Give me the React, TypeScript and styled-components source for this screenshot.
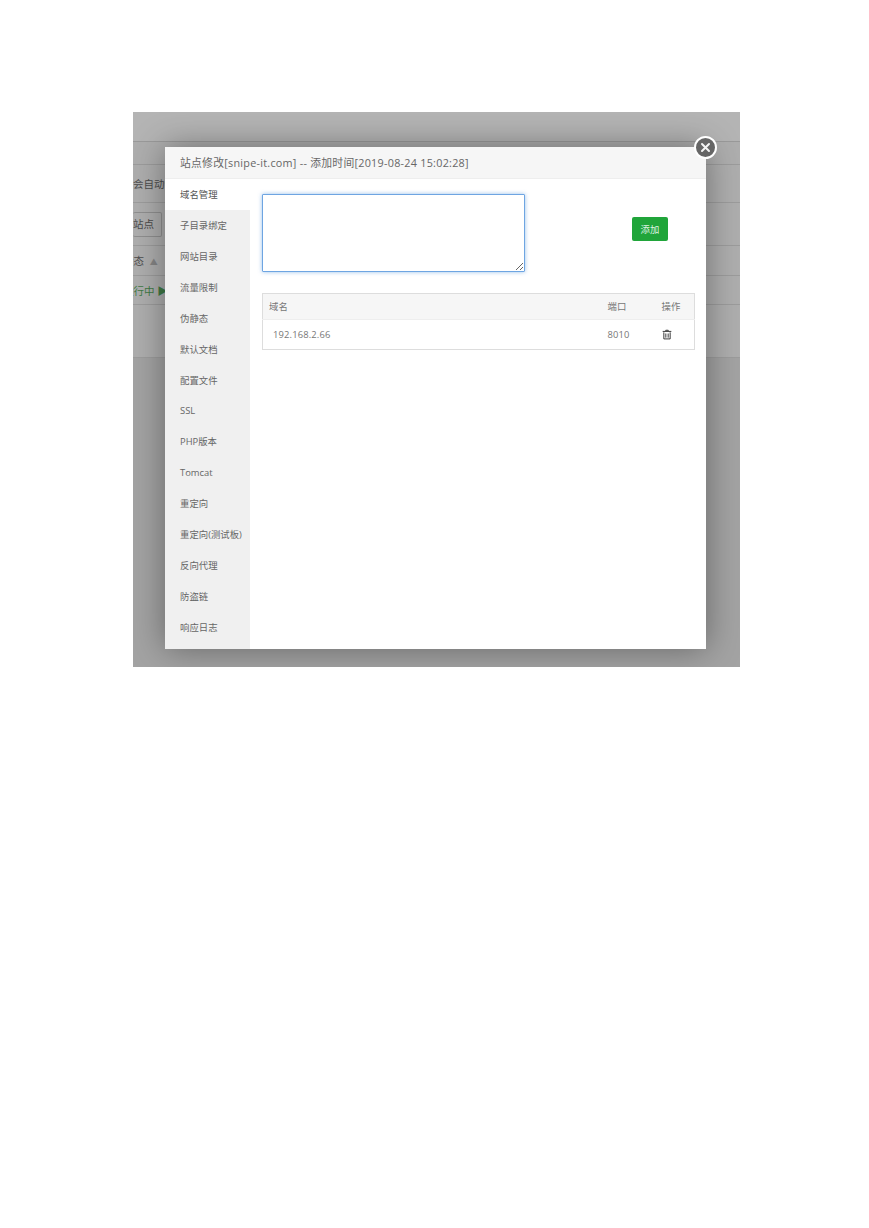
import styled, { createGlobalStyle } from "styled-components";

const FONT = `"Open Sans", "Noto Sans CJK SC", sans-serif`;

const menuItems = [
  "域名管理",
  "子目录绑定",
  "网站目录",
  "流量限制",
  "伪静态",
  "默认文档",
  "配置文件",
  "SSL",
  "PHP版本",
  "Tomcat",
  "重定向",
  "重定向(测试板)",
  "反向代理",
  "防盗链",
  "响应日志",
];

const App = () => {
  return (
    <>
      <GlobalStyle />
      <Page>
        <Shot>
          <TopBand />
          <BackRow $height={23} />
          <BackRow $height={38}>
            <BackText>会自动创建</BackText>
          </BackRow>
          <BackRow $height={43}>
            <BackButton>站点</BackButton>
            <BackButton>&nbsp;</BackButton>
          </BackRow>
          <BackRow $height={30}>
            <ClippedText>
              状态 <SortArrow>▲</SortArrow>
            </ClippedText>
          </BackRow>
          <BackRow $height={29}>
            <BackStatus>运行中 ▶</BackStatus>
          </BackRow>
          <BackRow $height={53} />
          <Modal>
            <CloseButton aria-label="close">
              <svg width="11" height="11" viewBox="0 0 11 11">
                <path
                  d="M2 2 L9 9 M9 2 L2 9"
                  stroke="#f4f4f4"
                  strokeWidth="2"
                  strokeLinecap="round"
                />
              </svg>
            </CloseButton>
            <ModalTitle>站点修改[snipe-it.com] -- 添加时间[2019-08-24 15:02:28]</ModalTitle>
            <ModalBody>
              <Sidebar>
                {menuItems.map((item, i) => (
                  <MenuItem key={item} $active={i === 0}>
                    {item}
                  </MenuItem>
                ))}
              </Sidebar>
              <Content>
                <FormRow>
                  <DomainInput />
                  <AddButton>添加</AddButton>
                </FormRow>
                <DomainTable>
                  <colgroup>
                    <col />
                    <col width="54" />
                    <col width="40" />
                  </colgroup>
                  <thead>
                    <tr>
                      <NameHeadCell>域名</NameHeadCell>
                      <HeadCell>端口</HeadCell>
                      <HeadCell>操作</HeadCell>
                    </tr>
                  </thead>
                  <tbody>
                    <tr>
                      <DomainCell>192.168.2.66</DomainCell>
                      <BodyCell>8010</BodyCell>
                      <BodyCell>
                        <TrashIcon viewBox="0 0 12 12">
                          <path
                            d="M4.5 1.8 V0.9 H7.5 V1.8 M0.8 2.3 H11.2 M2.2 3.4 V11.3 H9.8 V3.4 M4.6 4.8 V9.8 M7.4 4.8 V9.8"
                            fill="none"
                            stroke="#2a2a2a"
                            strokeWidth="1.1"
                          />
                        </TrashIcon>
                      </BodyCell>
                    </tr>
                  </tbody>
                </DomainTable>
              </Content>
            </ModalBody>
          </Modal>
        </Shot>
      </Page>
    </>
  );
};
export default App;

const GlobalStyle = createGlobalStyle`
  html, body {
    margin: 0;
    padding: 0;
    background: #fff;
  }
`;

const Page = styled.div`
  width: 869px;
  height: 1228px;
  padding: 112px 0 0 133px;
  box-sizing: border-box;
  font-family: ${FONT};
`;
const Shot = styled.div`
  position: relative;
  width: 607px;
  height: 555px;
  overflow: hidden;
  background: #a3a3a3;
`;
const TopBand = styled.div`
  height: 30px;
  background: #b4b4b4;
  border-bottom: 1px solid #9a9a9a;
  box-sizing: border-box;
`;
const BackRow = styled.div<{ $height: number }>`
  height: ${(p) => p.$height}px;
  box-sizing: border-box;
  display: flex;
  align-items: center;
  gap: 3px;
  background: #aeaeae;
  border-bottom: 1px solid #9c9c9c;
`;
const BackText = styled.span`
  font-size: 10.5px;
  color: #4c4c4c;
  white-space: nowrap;
`;
const ClippedText = styled(BackText)`
  margin-left: -10px;
`;
const SortArrow = styled.span`
  margin-left: 3px;
  font-size: 8px;
  color: #858585;
`;
const BackStatus = styled(BackText)`
  margin-left: -10px;
  color: #3f7a45;
`;
const BackButton = styled.div`
  height: 23px;
  line-height: 23px;
  padding: 0 7px 0 0;
  border: 1px solid #8f8f8f;
  border-left: none;
  border-radius: 2px;
  font-size: 10.5px;
  color: #4c4c4c;
`;
const Modal = styled.div`
  position: absolute;
  left: 32px;
  top: 35px;
  width: 541px;
  height: 502px;
  display: flex;
  flex-direction: column;
  background: #fff;
  box-shadow: 0 0 32px rgba(0, 0, 0, 0.38);
`;
const CloseButton = styled.div`
  position: absolute;
  top: -11px;
  right: -11px;
  width: 23px;
  height: 23px;
  box-sizing: border-box;
  display: flex;
  align-items: center;
  justify-content: center;
  border: 2px solid #fff;
  border-radius: 50%;
  background: #666;
`;
const ModalTitle = styled.div`
  height: 32px;
  line-height: 31px;
  padding-left: 15px;
  box-sizing: border-box;
  background: #f6f6f6;
  border-bottom: 1px solid #eee;
  font-size: 10.8px;
  letter-spacing: 0.26px;
  color: #666;
  white-space: nowrap;
`;
const ModalBody = styled.div`
  flex: 1;
  display: flex;
  min-height: 0;
`;
const Sidebar = styled.div`
  width: 85px;
  flex-shrink: 0;
  background: #f0f0f0;
`;
const MenuItem = styled.div<{ $active: boolean }>`
  height: 30.93px;
  line-height: 32.5px;
  padding-left: 15px;
  font-size: 9.4px;
  color: ${(p) => (p.$active ? "#555" : "#666")};
  background: ${(p) => (p.$active ? "#fff" : "transparent")};
  white-space: nowrap;
`;
const Content = styled.div`
  flex: 1;
  padding: 15px 11px 0 12px;
  min-width: 0;
`;
const FormRow = styled.div`
  display: flex;
  align-items: flex-start;
`;
const DomainInput = styled.textarea`
  width: 263px;
  height: 78px;
  box-sizing: border-box;
  margin: 0;
  border: 1px solid #6ea5e2;
  border-radius: 1px;
  outline: none;
  box-shadow: 0 0 4px rgba(110, 165, 226, 0.7);
`;
const AddButton = styled.button`
  width: 36px;
  height: 24px;
  margin: 23px 0 0 107px;
  padding: 0;
  border: none;
  border-radius: 2px;
  background: #20a53a;
  color: #dff2e3;
  font-family: ${FONT};
  font-size: 9.4px;
`;
const DomainTable = styled.table`
  width: 433px;
  margin-top: 21px;
  table-layout: fixed;
  border-collapse: collapse;
  border: 1px solid #ddd;
  font-size: 9.4px;
`;
const HeadCell = styled.th`
  height: 26px;
  padding: 0 0 2px 7px;
  box-sizing: border-box;
  background: #f6f6f6;
  border-bottom: 1px solid #eee;
  color: #777;
  font-weight: 400;
  text-align: left;
`;
const NameHeadCell = styled(HeadCell)`
  padding-left: 6px;
`;
const BodyCell = styled.td`
  height: 29px;
  padding: 0 0 0 7px;
  color: #777;
  letter-spacing: 0.15px;
`;
const DomainCell = styled(BodyCell)`
  padding-left: 10px;
`;
const TrashIcon = styled.svg`
  display: block;
  width: 10px;
  height: 11px;
`;
